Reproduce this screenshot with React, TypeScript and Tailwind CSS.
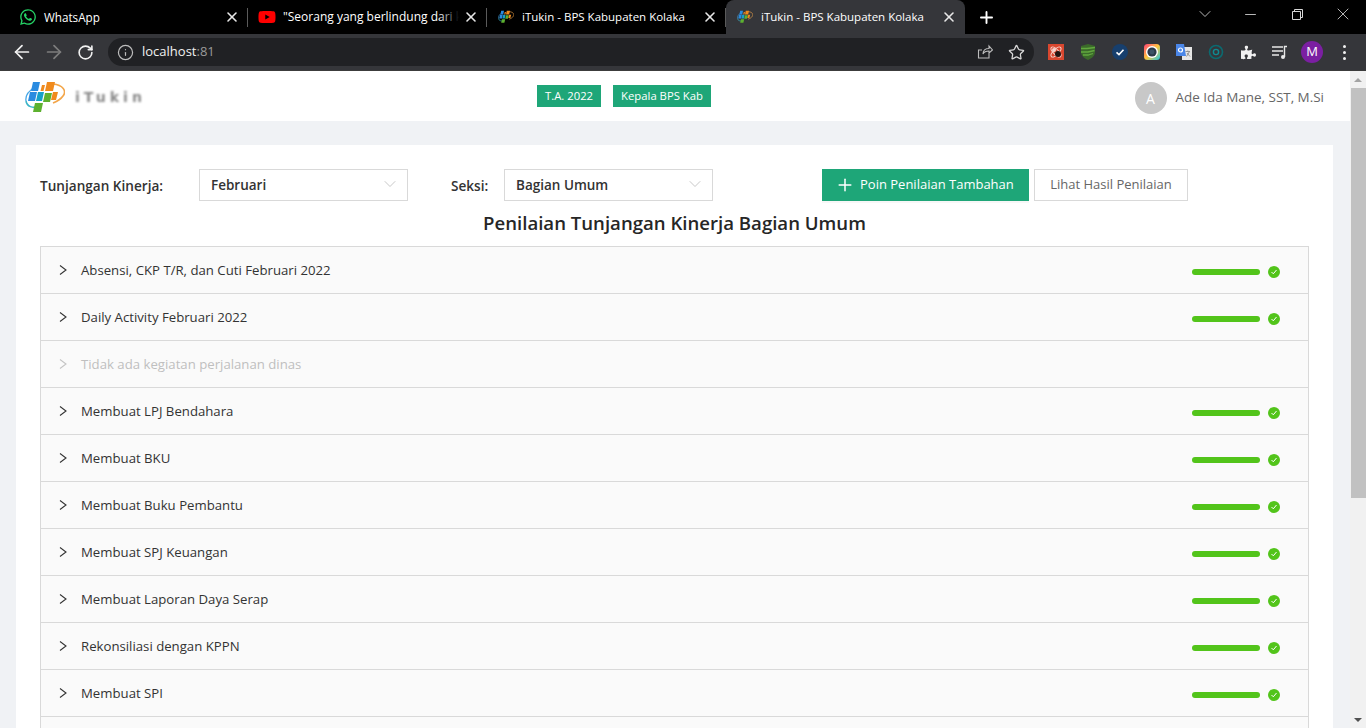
import React from "react";
import { ArrowLeft, ArrowRight, RotateCw, Info, Star, X, Plus, ChevronDown, Minus } from "lucide-react";
import { FaWhatsapp, FaYoutube, FaPuzzlePiece } from "react-icons/fa";

const rows = [
  { title: "Absensi, CKP T/R, dan Cuti Februari 2022", done: true },
  { title: "Daily Activity Februari 2022", done: true },
  { title: "Tidak ada kegiatan perjalanan dinas", done: false },
  { title: "Membuat LPJ Bendahara", done: true },
  { title: "Membuat BKU", done: true },
  { title: "Membuat Buku Pembantu", done: true },
  { title: "Membuat SPJ Keuangan", done: true },
  { title: "Membuat Laporan Daya Serap", done: true },
  { title: "Rekonsiliasi dengan KPPN", done: true },
  { title: "Membuat SPI", done: true },
  { title: "", done: false },
];

const LogoMark = ({ width = 40, blur }: { width?: number; blur?: boolean }) => (
  <svg width={width} height={width * 0.8} viewBox="0 0 40 32" className={blur ? "blur-[0.4px]" : ""}>
    <path d="M1 20C0 14 5 9 10 6" fill="none" stroke="#4aa8e6" strokeWidth="1.3" />
    <path d="M1 20c1 6 7 7 11 6" fill="none" stroke="#3cb5c8" strokeWidth="1.6" />
    <path d="M28 3c10 1 14 7 10 12-2 3-5 5-10 7" fill="none" stroke="#f3a64a" strokeWidth="1.6" />
    <polygon points="8,1 15,1 13,10 6,10" fill="#2a8be0" />
    <polygon points="22,1 30,1 28,10 20,10" fill="#f08a1d" />
    <polygon points="17,4 20,4 18.500,10 15.500,10" fill="#f08a1d" />
    <polygon points="5,11 12,11 10,20 3,20" fill="#2a8be0" />
    <polygon points="13,11 19,11 17,20 11,20" fill="#16a0c9" />
    <polygon points="20,12 27,12 25,21 18,21" fill="#5db12f" />
    <polygon points="28,11 33,11 31,19 26,19" fill="#f08a1d" />
    <polygon points="10,22 18,22 16,31 8,31" fill="#5db12f" />
  </svg>
);

const Tab = ({
  icon,
  title,
  textClass,
  active,
  fade,
}: {
  icon: React.ReactNode;
  title: string;
  textClass: string;
  active?: boolean;
  fade?: boolean;
}) => (
  <div className={`relative flex items-center h-[34px] w-[239px] pl-[11px] pr-2 text-white ${active ? "bg-[#35363a] rounded-t-lg" : ""}`}>
    <div className="w-4 h-4 flex items-center justify-center shrink-0">{icon}</div>
    <div className={`relative ml-2 flex-1 min-w-0 leading-[18px] whitespace-nowrap ${textClass} ${fade ? "overflow-hidden" : ""}`}>
      {title}
      {fade && <div className="absolute right-0 top-0 h-full w-[20px] bg-gradient-to-r from-transparent to-black" />}
    </div>
    <X size={16} strokeWidth={2.4} className="ml-1 shrink-0 text-[#e8e8e8]" />
    {!active && <div className="absolute right-0 top-[8px] h-[19px] w-px bg-[#5a5a5a]" />}
  </div>
);

const Extensions = () => (
  <div className="flex items-center gap-[16px] ml-[14px]">
    <svg width="16" height="16" viewBox="0 0 16 16">
      <rect width="16" height="16" fill="#d9472f" />
      <ellipse cx="8" cy="8" rx="6.500" ry="2.600" fill="none" stroke="#f6d5cf" strokeWidth="1" transform="rotate(45 8 8)" />
      <ellipse cx="8" cy="8" rx="6.500" ry="2.600" fill="none" stroke="#f6d5cf" strokeWidth="1" transform="rotate(-45 8 8)" />
      <circle cx="6" cy="6" r="2" fill="#f6d5cf" />
      <circle cx="10" cy="10" r="3" fill="#241512" />
    </svg>
    <svg width="16" height="16" viewBox="0 0 16 16">
      <path d="M1 2 8 0l7 2v6c0 4-3 6-7 8-4-2-7-4-7-8z" fill="#3b6a2a" />
      <path d="M1 4.500h6l8-1M1 8h7l6.500-1.500M3 11h5l5-1.500" fill="none" stroke="#62a83f" strokeWidth="1.300" />
    </svg>
    <svg width="16" height="16" viewBox="0 0 16 16">
      <circle cx="8" cy="8" r="8" fill="#173f6d" />
      <path d="M4.500 8.300 7 10.600 11.500 5.800" fill="none" stroke="#fff" strokeWidth="1.600" />
    </svg>
    <svg width="16" height="16" viewBox="0 0 16 16">
      <defs>
        <linearGradient id="ring" x1="0" y1="0" x2="1" y2="1">
          <stop offset="0" stopColor="#ff3d77" />
          <stop offset=".5" stopColor="#ffc83d" />
          <stop offset="1" stopColor="#1fc8e8" />
        </linearGradient>
      </defs>
      <rect width="16" height="16" rx="3.500" fill="url(#ring)" />
      <circle cx="8" cy="8" r="6" fill="#fff" />
      <circle cx="8" cy="8" r="4.600" fill="#2b3a4a" />
      <circle cx="8" cy="8" r="2.400" fill="#3b5266" />
    </svg>
    <svg width="16" height="16" viewBox="0 0 16 16">
      <rect x="6" y="3" width="10" height="13" fill="#e6e6e6" />
      <path d="M9.500 7.500h4.500M11.800 6.500v1M10.500 12.500l3-5M11 9l3 3.500" stroke="#8a8a8a" strokeWidth=".9" fill="none" />
      <path d="M0 0h8l2 12H0z" fill="#4a86e8" />
      <circle cx="4.500" cy="6" r="2" fill="none" stroke="#fff" strokeWidth="1.200" />
    </svg>
    <svg width="16" height="16" viewBox="0 0 16 16">
      <circle cx="8" cy="8" r="6.500" fill="none" stroke="#0b6a70" strokeWidth="1.600" />
      <circle cx="8" cy="8" r="2.600" fill="none" stroke="#0f8b92" strokeWidth="1.400" />
    </svg>
    <div className="w-4 flex justify-center">
      <FaPuzzlePiece size={15} className="text-[#f1f1f1] shrink-0" />
    </div>
    <svg width="16" height="16" viewBox="0 0 16 16" className="text-[#e8e8e8]">
      <path d="M0 3h11M0 7h11M0 11h7" stroke="currentColor" strokeWidth="1.400" />
      <path d="M12.500 13V2.500h2.500" fill="none" stroke="currentColor" strokeWidth="1.400" />
      <circle cx="11" cy="13" r="2" fill="currentColor" />
    </svg>
  </div>
);

const Browser = () => (
  <div className="shrink-0">
    <div className="flex items-start h-[34px] bg-black">
      <div className="w-[9px]" />
      <Tab icon={<FaWhatsapp size={18} className="text-[#25d366] shrink-0" />} title="WhatsApp" textClass="text-[11.7px]" />
      <Tab icon={<FaYoutube size={18} className="text-[#f00] shrink-0" />} title={'"Seorang yang berlindung dari ke'} textClass="text-[12px]" fade />
      <Tab icon={<LogoMark width={17} />} title="iTukin - BPS Kabupaten Kolaka" textClass="text-[11.5px]" />
      <Tab icon={<LogoMark width={17} />} title="iTukin - BPS Kabupaten Kolaka" textClass="text-[11.5px]" active />
      <Plus size={19} strokeWidth={2.4} className="ml-[12px] mt-[8px] text-white" />
      <div className="ml-auto flex items-center h-[28px] text-[#d8d8d8]">
        <ChevronDown size={20} strokeWidth={1} />
        <Minus size={17} strokeWidth={1.200} className="ml-[27px]" />
        <svg width="11" height="11" viewBox="0 0 11 11" className="ml-[33px]">
          <path d="M.5 2.500h8v8h-8zM2.500 2.500v-2h8v8h-2" fill="none" stroke="currentColor" />
        </svg>
        <X size={20} strokeWidth={1} className="ml-[30px] mr-[13px]" />
      </div>
    </div>
    <div className="flex items-center h-[36px] bg-[#35363a] border-b border-[#3c3c3c] box-content">
      <ArrowLeft size={22} strokeWidth={1.900} className="ml-[11px] text-[#f1f1f1]" />
      <ArrowRight size={22} strokeWidth={1.900} className="ml-[10px] text-[#7d7d7d]" />
      <RotateCw size={17} strokeWidth={2.300} className="ml-[12px] text-[#f1f1f1]" />
      <div className="ml-[14px] flex items-center h-[28px] w-[926px] rounded-full bg-[#202124] text-[13px]">
        <Info size={17} strokeWidth={1.700} className="ml-[9px] text-[#bdbdbd]" />
        <span className="ml-[8px] text-[#f1f1f1]">localhost</span>
        <span className="text-[#9a9a9a]">:81</span>
        <svg width="16" height="16" viewBox="0 0 16 16" className="ml-auto text-[#bdbdbd]">
          <path d="M12 9.500V14H1.500V6H5M6 10c0-4 3-5.500 6-5.500V2l3.500 4L12 9V7c-3 0-5 1-6 3z" fill="none" stroke="currentColor" strokeWidth="1.100" />
        </svg>
        <Star size={17} strokeWidth={1.800} className="ml-[15px] mr-[9px] text-[#d8d8d8]" />
      </div>
      <Extensions />
      <div className="ml-[13px] w-[22px] h-[22px] rounded-full bg-[#7b1fa2] text-white text-[13px] flex items-center justify-center">M</div>
      <div className="ml-[20px] flex flex-col gap-[3px]">
        <div className="w-[3px] h-[3px] rounded-full bg-[#f1f1f1]" />
        <div className="w-[3px] h-[3px] rounded-full bg-[#f1f1f1]" />
        <div className="w-[3px] h-[3px] rounded-full bg-[#f1f1f1]" />
      </div>
    </div>
  </div>
);

const SelectBox = ({ value }: { value: string }) => (
  <div className="flex items-center justify-between h-[32px] w-[209px] bg-white border border-[#d9d9d9] pl-[11px] pr-[7px]">
    <span className="text-[13.5px] font-semibold text-[#333]">{value}</span>
    <ChevronDown size={20} strokeWidth={0.9} className="text-[#b5b5b5] -mt-[2px]" />
  </div>
);

const Row = ({ title, done }: { title: string; done: boolean }) => (
  <div className="flex items-center h-[47px] shrink-0 border-b border-[#d9d9d9] bg-[#fafafa] pl-[18px] pr-[28px]">
    {title && (
      <svg width="8" height="10" viewBox="0 0 8 10" className={done ? "text-[#333]" : "text-[#c4c4c4]"}>
        <path d="M1 .5 7 5 1 9.500" fill="none" stroke="currentColor" strokeWidth="1.100" />
      </svg>
    )}
    {title && <span className={`ml-[14px] mt-[1px] text-[13.2px] ${done ? "text-[#333]" : "text-[#bfbfbf]"}`}>{title}</span>}
    {done && (
      <div className="ml-auto flex items-center mt-[3px]">
        <div className="w-[68px] h-[6px] rounded-full bg-[#52c41a]" />
        <div className="ml-[8px] w-[12px] h-[12px] rounded-full bg-[#52c41a] flex items-center justify-center">
          <svg width="8" height="8" viewBox="0 0 8 8">
            <path d="M1.500 4 3.300 5.800 6.500 2" fill="none" stroke="#fff" strokeWidth="1" />
          </svg>
        </div>
      </div>
    )}
  </div>
);

const App = () => (
  <div className="flex flex-col h-[728px] w-[1366px] overflow-hidden font-['Open_Sans',sans-serif]">
    <Browser />
    <div className="flex flex-1 min-h-0">
      <div className="flex-1 min-w-0 bg-[#f0f2f5] overflow-hidden">
        {/* Header */}
        <div className="relative flex items-center justify-between h-[50px] bg-white">
          <div className="flex items-center ml-[25px] mt-[2px]">
            <LogoMark width={40} blur />
            <span className="ml-[10px] text-[14px] font-bold tracking-[4px] text-[#8a8a8a] blur-[0.9px] font-['DejaVu_Sans',sans-serif]">iTukin</span>
          </div>
          <div className="absolute left-[537px] top-[14px] flex gap-3">
            <span className="h-[22px] px-2 bg-[#1ea678] text-white text-[11.3px] leading-[22px]">T.A. 2022</span>
            <span className="h-[22px] px-2 bg-[#1ea678] text-white text-[11.3px] leading-[22px]">Kepala BPS Kab</span>
          </div>
          <div className="flex items-center mr-[26px] mt-[4px]">
            <div className="w-8 h-8 rounded-full bg-[#c8c8c8] text-white text-[14px] flex items-center justify-center">A</div>
            <span className="ml-[9px] text-[13.450px] text-[#666] -mt-[2px]">Ade Ida Mane, SST, M.Si</span>
          </div>
        </div>

        {/* Card */}
        <div className="mt-[24px] ml-[16px] w-[1317px] h-[700px] bg-white pt-[24px] px-[24px]">
          <div className="flex items-center h-[32px]">
            <span className="w-[159px] mt-[2px] text-[13.600px] font-semibold text-[#333]">Tunjangan Kinerja:</span>
            <SelectBox value="Februari" />
            <span className="ml-[43px] w-[53px] mt-[2px] text-[13.600px] font-semibold text-[#333]">Seksi:</span>
            <SelectBox value="Bagian Umum" />
            <button className="ml-[109px] flex items-center h-[32px] w-[207px] pl-[13px] bg-[#1ea678] text-white text-[13px] shadow-[0_2px_0_rgba(0,0,0,0.03)]">
              <Plus size={20} strokeWidth={1.800} className="mr-[5px]" />
              Poin Penilaian Tambahan
            </button>
            <button className="ml-[5px] h-[32px] w-[154px] bg-white border border-[#d9d9d9] text-[13px] text-[#666]">Lihat Hasil Penilaian</button>
          </div>
          <h1 className="mt-[7px] h-[38px] text-center text-[18.600px] leading-[30px] font-semibold text-[#262626]">
            Penilaian Tunjangan Kinerja Bagian Umum
          </h1>
          <div className="flex flex-col border border-[#d9d9d9] border-b-0">
            {rows.map((row, index) => (
              <Row key={index} title={row.title} done={row.done} />
            ))}
          </div>
        </div>
      </div>

      {/* Scrollbar */}
      <div className="flex flex-col items-center justify-between w-[16px] bg-[#f1f1f1] shrink-0">
        <div className="w-full flex flex-col items-center">
          <div className="h-[17px] flex items-center">
            <div className="border-x-[4px] border-x-transparent border-b-[4px] border-b-[#a3a3a3]" />
          </div>
          <div className="w-[15px] ml-[1px] h-[410px] bg-[#c1c1c1]" />
        </div>
        <div className="h-[17px] flex items-center">
          <div className="border-x-[4px] border-x-transparent border-t-[4px] border-t-[#505050]" />
        </div>
      </div>
    </div>
  </div>
);

export default App;
